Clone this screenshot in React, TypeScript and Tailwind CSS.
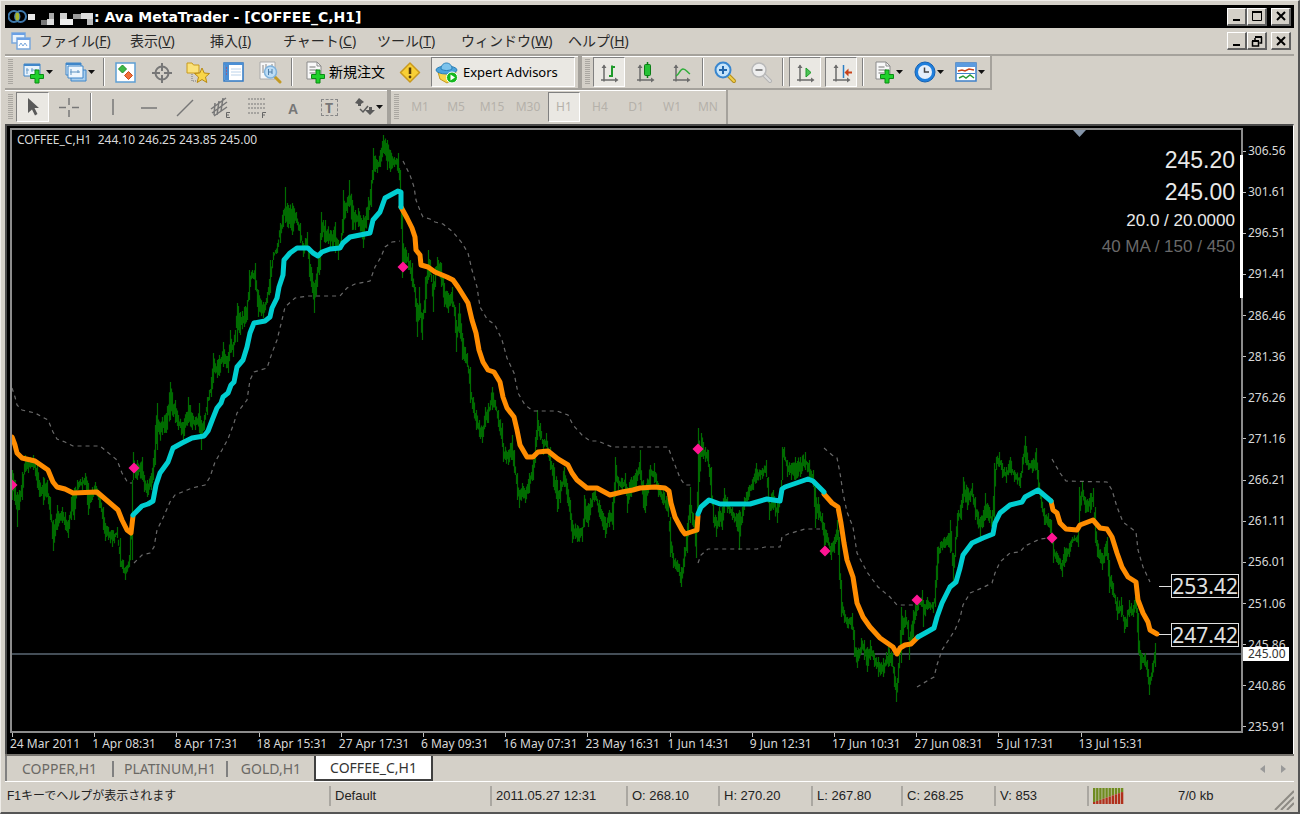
import type { ReactNode } from "react"
import clsx from "clsx"

const menus = [
  { label: "ファイル", key: "F" },
  { label: "表示", key: "V" },
  { label: "挿入", key: "I" },
  { label: "チャート", key: "C" },
  { label: "ツール", key: "T" },
  { label: "ウィンドウ", key: "W" },
  { label: "ヘルプ", key: "H" },
]

const periods = ["M1", "M5", "M15", "M30", "H1", "H4", "D1", "W1", "MN"]

const prices = [
  "306.56", "301.61", "296.51", "291.41", "286.46", "281.36", "276.26", "271.16",
  "266.21", "261.11", "256.01", "251.06", "245.86", "240.86", "235.91",
]

const dates = [
  "24 Mar 2011", "1 Apr 08:31", "8 Apr 17:31", "18 Apr 15:31", "27 Apr 17:31", "6 May 09:31", "16 May 07:31",
  "23 May 16:31", "1 Jun 14:31", "9 Jun 12:31", "17 Jun 10:31", "27 Jun 08:31", "5 Jul 17:31", "13 Jul 15:31",
]

// x, high, low
const bars = [
  [12, 470, 500], [15, 480, 505], [17, 492, 527], [19, 490, 510], [22, 472, 500], [25, 455, 470], [28, 457, 473],
  [33, 455, 470], [37, 462, 488], [39, 480, 497], [43, 477, 505], [47, 480, 497], [50, 500, 520], [53, 525, 551],
  [57, 505, 530], [62, 507, 523], [65, 512, 530], [68, 520, 538], [71, 497, 520], [74, 488, 520], [77, 480, 490],
  [82, 477, 490], [85, 473, 485], [88, 483, 515], [92, 487, 500], [95, 482, 495], [99, 495, 508], [103, 507, 530],
  [105, 523, 541], [108, 527, 540], [112, 530, 547], [117, 527, 538], [120, 555, 567], [123, 560, 573],
  [125, 567, 580], [129, 555, 567], [132, 480, 560], [133, 452, 480], [137, 460, 480], [142, 457, 480],
  [144, 475, 492], [147, 480, 497], [151, 473, 490], [153, 458, 480], [155, 425, 465], [157, 403, 450],
  [162, 417, 435], [166, 413, 433], [170, 382, 420], [175, 400, 423], [178, 415, 430], [183, 422, 440],
  [188, 397, 423], [192, 413, 430], [195, 417, 430], [199, 403, 433], [201, 420, 450], [204, 415, 430],
  [207, 397, 410], [211, 377, 397], [213, 353, 383], [217, 360, 378], [219, 355, 376], [223, 342, 367],
  [228, 352, 373], [230, 330, 353], [233, 342, 357], [237, 303, 330], [240, 312, 335], [244, 307, 327],
  [247, 300, 320], [249, 270, 293], [252, 270, 278], [255, 263, 290], [258, 293, 317], [263, 302, 318],
  [267, 292, 303], [270, 260, 293], [273, 252, 260], [277, 243, 253], [280, 223, 237], [283, 210, 227],
  [285, 187, 223], [287, 203, 227], [292, 203, 235], [296, 212, 223], [300, 223, 243], [303, 243, 257],
  [307, 232, 247], [309, 253, 277], [312, 273, 293], [314, 283, 313], [317, 267, 287], [320, 233, 270],
  [321, 212, 240], [325, 220, 243], [330, 230, 247], [335, 222, 253], [338, 240, 260], [341, 233, 250],
  [343, 190, 227], [347, 197, 213], [349, 180, 207], [352, 200, 230], [355, 210, 230], [358, 208, 227],
  [363, 215, 248], [368, 197, 220], [371, 180, 207], [373, 148, 173], [377, 160, 173], [380, 150, 167],
  [383, 135, 153], [387, 140, 170], [390, 150, 172], [394, 157, 167], [398, 153, 173], [400, 170, 203],
  [402, 213, 278], [405, 247, 263], [408, 253, 270], [412, 263, 287], [415, 287, 307], [417, 303, 337],
  [419, 287, 320], [422, 313, 340], [425, 277, 313], [428, 250, 280], [430, 260, 275], [433, 280, 312],
  [435, 267, 287], [437, 257, 273], [441, 263, 287], [444, 283, 307], [448, 293, 313], [452, 287, 307],
  [455, 307, 333], [456, 320, 352], [459, 303, 333], [462, 333, 360], [467, 353, 367], [470, 377, 403],
  [473, 397, 413], [476, 410, 430], [479, 420, 437], [482, 427, 443], [485, 407, 427], [488, 403, 423],
  [492, 387, 410], [495, 400, 410], [498, 413, 427], [502, 423, 447], [503, 443, 462], [508, 450, 465],
  [512, 435, 460], [514, 450, 473], [517, 473, 500], [519, 490, 508], [522, 483, 497], [525, 490, 503],
  [529, 473, 493], [533, 460, 480], [535, 437, 463], [537, 410, 440], [540, 423, 440], [543, 440, 455],
  [546, 433, 447], [550, 450, 470], [553, 463, 487], [557, 480, 512], [560, 480, 503], [564, 467, 487],
  [567, 483, 503], [570, 500, 520], [572, 520, 543], [577, 525, 542], [582, 527, 542], [584, 495, 523],
  [588, 503, 527], [592, 493, 507], [595, 490, 500], [599, 500, 517], [603, 513, 530], [605, 517, 538],
  [609, 510, 527], [613, 497, 530], [615, 457, 483], [618, 477, 490], [622, 478, 490], [625, 473, 493],
  [627, 487, 513], [631, 477, 497], [635, 473, 490], [640, 450, 480], [643, 482, 508], [645, 487, 513],
  [650, 465, 483], [654, 463, 483], [658, 483, 497], [663, 490, 505], [668, 500, 517], [670, 530, 557],
  [673, 553, 568], [677, 560, 572], [681, 567, 587], [684, 547, 567], [687, 523, 553], [690, 487, 523],
  [693, 513, 527], [696, 527, 558], [698, 428, 520], [701, 433, 457], [705, 447, 462], [708, 450, 467],
  [711, 470, 500], [713, 507, 523], [716, 517, 537], [719, 507, 527], [722, 507, 530], [724, 488, 513],
  [727, 497, 513], [732, 507, 520], [736, 513, 527], [739, 510, 550], [742, 507, 523], [744, 497, 510],
  [748, 487, 500], [753, 477, 490], [756, 463, 483], [760, 470, 480], [766, 460, 477], [768, 487, 503],
  [769, 497, 520], [773, 490, 510], [777, 503, 523], [781, 480, 500], [782, 447, 463], [784, 447, 460],
  [787, 460, 477], [791, 463, 480], [795, 457, 480], [800, 457, 477], [805, 452, 470], [809, 460, 477],
  [813, 470, 487], [815, 493, 528], [818, 497, 520], [822, 513, 530], [824, 523, 550], [827, 533, 543],
  [831, 543, 560], [834, 537, 553], [837, 520, 540], [839, 537, 580], [841, 597, 617], [844, 610, 623],
  [847, 617, 628], [852, 613, 630], [854, 633, 657], [857, 650, 668], [861, 638, 653], [864, 640, 660],
  [867, 647, 672], [870, 640, 660], [874, 653, 667], [878, 657, 677], [883, 658, 677], [888, 647, 667],
  [892, 653, 667], [894, 667, 687], [896, 683, 702], [898, 663, 683], [901, 607, 647], [905, 610, 627],
  [908, 620, 640], [909, 637, 660], [913, 610, 637], [915, 603, 620], [918, 597, 610], [922, 590, 607],
  [923, 600, 627], [927, 597, 610], [933, 602, 613], [935, 580, 607], [937, 547, 573], [940, 542, 553],
  [944, 537, 548], [948, 533, 547], [950, 520, 553], [953, 553, 587], [955, 537, 557], [957, 513, 527],
  [961, 500, 520], [963, 477, 503], [967, 487, 510], [972, 483, 497], [975, 503, 520], [980, 517, 537],
  [983, 510, 527], [985, 493, 520], [989, 507, 523], [992, 510, 530], [994, 463, 520], [996, 457, 470],
  [999, 452, 467], [1002, 463, 478], [1006, 467, 483], [1010, 457, 473], [1014, 470, 482], [1020, 473, 488],
  [1022, 457, 473], [1025, 436, 463], [1028, 460, 470], [1032, 460, 473], [1036, 448, 470], [1038, 473, 493],
  [1041, 493, 508], [1044, 515, 525], [1048, 513, 527], [1051, 520, 537], [1053, 543, 563], [1057, 553, 563],
  [1062, 560, 577], [1064, 547, 567], [1069, 543, 557], [1072, 537, 543], [1078, 530, 547], [1079, 487, 527],
  [1082, 482, 497], [1085, 500, 513], [1090, 493, 513], [1093, 488, 507], [1095, 520, 543], [1097, 540, 557],
  [1102, 553, 570], [1104, 547, 563], [1107, 537, 560], [1109, 563, 593], [1113, 583, 597], [1117, 603, 620],
  [1121, 597, 617], [1124, 617, 633], [1127, 610, 627], [1129, 600, 617], [1133, 605, 617], [1136, 590, 613],
  [1138, 620, 653], [1140, 650, 670], [1145, 653, 667], [1147, 660, 677], [1149, 677, 695], [1152, 663, 677],
  [1155, 643, 667],
]

const downTrends = [
  "12,437 15,445 17,453 22,458 35,461 48,470 53,482 57,487 65,489 73,493 97,492 118,510 122,520 127,530 131,533 133,516",
  "401,207 407,218 412,228 415,237 416,250 420,255 421,265 428,267 435,272 447,277 453,280 458,287 463,295 468,303 472,320 476,333 479,350 483,362 488,370 494,372 500,382 503,397 507,408 514,417 517,430 520,445 527,457 533,457 538,452 548,451 558,459 568,465 572,473 577,480 587,488 597,488 610,495 622,492 633,490 640,488 655,487 665,488 669,491 671,503 675,517 682,530 685,534 697,530 698,516",
  "824,494 832,503 838,507 841,523 844,543 847,560 853,577 857,603 863,617 870,627 880,638 893,647 897,654 900,648 905,645 911,644 918,637",
  "1051,501 1053,510 1057,513 1060,523 1066,529 1077,530 1080,525 1093,520 1100,528 1107,529 1112,537 1117,553 1122,567 1128,577 1136,582 1138,600 1143,613 1148,622 1150,630 1157,634",
]

const upTrends = [
  "133,515 142,506 148,504 153,501 156,485 160,473 168,462 173,448 182,443 192,438 204,436 208,431 213,418 217,408 221,403 223,397 228,393 231,385 234,382 237,367 243,360 247,347 250,333 254,323 265,321 270,317 272,308 277,298 279,287 283,275 284,260 290,253 297,248 308,248 313,253 318,256 322,252 330,249 340,248 343,243 350,237 370,233 373,220 380,212 385,198 398,191 401,192 401,207",
  "698,514 701,507 709,500 720,504 750,504 767,499 780,501 782,489 785,487 808,479 813,481 824,492",
  "918,637 927,632 934,628 937,617 942,603 950,587 956,582 960,568 963,555 972,543 983,538 993,534 995,523 1000,513 1010,505 1022,502 1025,497 1038,490 1051,501",
]

const bands = [
  "12,388 15,397 17,405 22,410 35,413 48,420 53,432 57,439 65,442 73,446 100,446 117,460 122,473 128,483 132,483",
  "134,563 142,555 150,553 154,547 157,530 163,518 170,502 175,495 192,488 205,485 210,477 215,462 222,450 228,439 234,423 237,413 247,400 250,380 254,372 267,368 272,353 277,340 282,320 285,307 295,298 308,296 340,296 347,288 355,284 370,281 375,267 381,257 385,247 392,242 400,241",
  "403,161 410,175 414,187 416,200 421,213 423,217 430,219 435,222 443,224 453,232 462,243 468,253 472,270 477,287 480,307 487,319 495,325 502,340 507,358 514,373 518,393 525,405 533,411 557,411 568,415 573,425 582,435 590,441 598,441 612,447 668,447 673,460 680,478 685,485 693,485",
  "698,563 701,555 708,549 757,549 765,547 780,547 782,537 788,534 805,529 820,529",
  "824,448 832,455 837,458 840,473 843,493 847,512 853,527 857,553 867,572 878,587 890,597 897,605 913,605",
  "917,687 927,681 934,677 937,665 942,650 955,630 960,618 963,605 970,593 982,588 992,583 995,573 1000,562 1010,553 1020,552 1025,546 1040,539 1050,538",
  "1052,459 1060,473 1066,481 1107,482 1112,490 1117,507 1123,522 1136,532 1138,550 1143,567 1150,582",
]

const signals = [[12, 485], [134, 468], [403, 267], [698, 449], [825, 551], [917, 600], [1052, 538]]

// fills in one bar per pixel between the known ones
function barPath() {
  let seed = 7
  const rand = () => {
    seed = (seed * 16807) % 2147483647
    return seed / 2147483647
  }
  let d = ""
  for (let i = 0; i < bars.length; i++) {
    const [x, hi, lo] = bars[i]
    d += `M${x + 0.5} ${hi}V${lo}`
    const next = bars[i + 1]
    if (!next) break
    for (let px = x + 1; px < next[0]; px++) {
      const t = (px - x) / (next[0] - x)
      const h = hi + (next[1] - hi) * t
      const l = lo + (next[2] - lo) * t
      d += `M${px + 0.5} ${(h + rand() * (l - h) * 0.4).toFixed(1)}V${(l - rand() * (l - h) * 0.4).toFixed(1)}`
    }
    // joins the two bars where the price jumps
    if (next[1] > lo || next[2] < hi) d += `M${next[0] + 0.5} ${next[1] > lo ? lo : next[2]}V${next[1] > lo ? next[1] : hi}`
  }
  return d
}

function Icon({ children }: { children: ReactNode }) {
  return (
    <svg viewBox="0 0 24 24" className="size-6 shrink-0" fill="none" aria-hidden="true">
      {children}
    </svg>
  )
}

const Plus = () => (
  <path d="M13 10h4v4.500h4.500v4H17V23h-4v-4.500H8.500v-4H13z" fill="#1fd12b" stroke="#0b8a14" />
)

const Axes = () => (
  <>
    <path d="M7 5.500v16M4 20h16" stroke="#6b6b6b" strokeWidth="1.500" />
    <path d="M4.500 8L7 4.500 9.500 8zM18 17.500l3.500 2.500-3.500 2.500z" fill="#6b6b6b" />
  </>
)

const Caret = () => (
  <svg viewBox="0 0 7 4" className="h-1 w-[7px] shrink-0" aria-hidden="true">
    <path d="M0 0h7L3.500 4z" fill="#111" />
  </svg>
)

const Page = () => (
  <>
    <path d="M4 2h10l4 4v13H4z" fill="#f8f8f8" stroke="#8b8b8b" />
    <path d="M14 2v4h4" stroke="#8b8b8b" />
    <path d="M6.500 7h6M6.500 10h8M6.500 13h6" stroke="#777" />
  </>
)

function ToolButton({
  label,
  pressed,
  className,
  children,
}: {
  label: string
  pressed?: boolean
  className?: string
  children: ReactNode
}) {
  return (
    <button
      type="button"
      aria-label={label}
      className={clsx(
        "flex h-[30px] shrink-0 items-center justify-center border",
        pressed
          ? "border-t-[#808080] border-r-white border-b-white border-l-[#808080] bg-[#eae8e3]"
          : "border-transparent",
        className ?? "w-9",
      )}
    >
      {children}
    </button>
  )
}

const Separator = () => <span className="mx-[3px] h-7 w-[2px] shrink-0 border-r border-white bg-[#808080]" />

const Grip = () => (
  <span className="mx-[3px] h-[26px] w-[5px] shrink-0 bg-[repeating-linear-gradient(#aaa7a1_0_1px,#d4d0c8_1px_2px)]" />
)

function WindowButton({ label, children }: { label: string; children: ReactNode }) {
  return (
    <button
      type="button"
      aria-label={label}
      className="flex h-[18px] w-5 items-center justify-center border-t border-r-2 border-b-2 border-l border-t-white border-r-[#606060] border-b-[#606060] border-l-white bg-[#d4d0c8]"
    >
      <svg viewBox="0 0 14 14" className="size-[14px]" fill="none" stroke="#000" strokeWidth="2" aria-hidden="true">
        {children}
      </svg>
    </button>
  )
}

function TitleBar() {
  return (
    <header className="flex h-[23px] items-center bg-black pr-[3px] pl-[3px] text-white">
      <svg viewBox="0 0 86 20" className="h-5 w-[86px]" fill="none" aria-hidden="true">
        <circle cx="6" cy="9.500" r="5.500" stroke="#3f79ad" strokeWidth="2" />
        <circle cx="12.500" cy="9.500" r="5.500" stroke="#3f79ad" strokeWidth="2" />
        <ellipse cx="9.300" cy="9.500" rx="2" ry="4" fill="#a9b62c" />
        <path d="M20 7h7v6h-7z" fill="#e8e8e8" />
        <path d="M33 13h6v5h-6z" fill="#777" />
        <path d="M39 12h7v6h-7z" fill="#ddd" />
        <path d="M41 6h5v6h-5z" fill="#aaa" />
        <path d="M52 6h7v6h-7z" fill="#d0d0d0" />
        <path d="M52 12h13v6H52z" fill="#eee" />
        <path d="M65 7h8v5h-8z" fill="#999" />
        <path d="M73 6h12v6H73z" fill="#ddd" />
        <path d="M79 12h6v6h-6z" fill="#bbb" />
      </svg>
      <h1 className="flex-1 truncate font-['DejaVu_Sans',sans-serif] text-[14px] leading-5 font-bold">
        : Ava MetaTrader - [COFFEE_C,H1]
      </h1>
      <div className="flex">
        <WindowButton label="Minimize">
          <path d="M3 11h7" />
        </WindowButton>
        <WindowButton label="Maximize">
          <path d="M2 3h10" />
          <path d="M2.500 2v9.500h9V2" strokeWidth="1" />
        </WindowButton>
        <span className="w-1" />
        <WindowButton label="Close">
          <path d="M3 3l8 8M11 3l-8 8" />
        </WindowButton>
      </div>
    </header>
  )
}

function MenuBar() {
  return (
    <nav className="flex h-7 items-center border-b-2 border-b-[#a5a29c] px-[3px]">
      <svg viewBox="0 0 20 20" className="mr-2 ml-[3px] size-5" fill="none" aria-hidden="true">
        <path d="M1 2h13v10H1z" fill="#eaf3fc" stroke="#7aa8dc" strokeWidth="1.500" />
        <path d="M1 3h13" stroke="#6ba0e4" strokeWidth="2" />
        <path d="M6 7h13v11H6z" fill="#fff" stroke="#7aa8dc" strokeWidth="1.500" />
        <path d="M6 8h13" stroke="#6ba0e4" strokeWidth="2" />
        <path d="M8 15l2-3 2 3 2-3 2 3" stroke="#7aa8dc" />
      </svg>
      <div className="grid flex-1 grid-cols-[91px_80px_73px_94px_84px_107px_auto] text-[14px] leading-5 text-[#2a2a2a]">
        {menus.map((menu) => (
          <button key={menu.key} type="button" className="text-left whitespace-nowrap">
            {menu.label}(<span className="underline">{menu.key}</span>)
          </button>
        ))}
      </div>
      <div className="flex">
        <WindowButton label="Minimize chart">
          <path d="M3 11h7" />
        </WindowButton>
        <WindowButton label="Restore chart">
          <path d="M5 3h7M2 7h7" />
          <path d="M5 4v3M11.500 3v6h-2M2.500 7v5h6V7" strokeWidth="1.500" />
        </WindowButton>
        <span className="w-1" />
        <WindowButton label="Close chart">
          <path d="M3 3l8 8M11 3l-8 8" />
        </WindowButton>
      </div>
    </nav>
  )
}

function StandardBar() {
  return (
    <div className="flex h-[34px]">
      <div className="flex items-center border-r-2 border-b-2 border-[#a5a29c] shadow-[inset_0_1px_0_#fff]">
        <Grip />
        <ToolButton label="New chart" className="w-[42px]">
          <Icon>
            <path d="M2 4h16v12H2z" fill="#e9f3fc" stroke="#3f86c9" />
            <path d="M2 5h16" stroke="#3f86c9" strokeWidth="2" />
            <path d="M5 8v6M4 10h3M10 8v4M9 10h6" stroke="#6f9fc8" />
            <Plus />
          </Icon>
          <Caret />
        </ToolButton>
        <ToolButton label="Profiles" className="w-[42px]">
          <Icon>
            <path d="M2 3h15v12H2z" fill="#dcecfa" stroke="#3f86c9" />
            <path d="M2 4h15" stroke="#3f86c9" strokeWidth="2" />
            <path d="M7 10h15v11H7z" fill="#a8cdec" stroke="#3f86c9" />
            <path d="M4 6h15v12H4z" fill="#eef6fd" stroke="#3f86c9" />
            <path d="M7 9v6M6 12h10M14 10v3" stroke="#5f93c2" />
          </Icon>
          <Caret />
        </ToolButton>
        <Separator />
        <ToolButton label="Market Watch">
          <Icon>
            <path d="M2 3h19v19H2z" fill="#fff" stroke="#5d9fd4" strokeWidth="1.500" />
            <path d="M8.500 5L12.500 9l-4 4-4-4z" fill="#3dbb45" stroke="#1f8a2a" />
            <path d="M14.500 11.500l4 4-4 4-4-4z" fill="#f0703a" stroke="#c94c1a" />
          </Icon>
        </ToolButton>
        <ToolButton label="Data Window">
          <Icon>
            <circle cx="12" cy="13" r="6.500" stroke="#777" strokeWidth="2" />
            <path d="M12 3v8M12 15v8M2 13h8M14 13h8" stroke="#777" strokeWidth="2" />
          </Icon>
        </ToolButton>
        <ToolButton label="Navigator">
          <Icon>
            <path d="M1 3h5l1.500 2H13v8H1z" fill="#fbe27a" stroke="#c99a1c" />
            <path d="M6 14v7h6" stroke="#777" strokeDasharray="1 1" />
            <path d="M16 8l2.200 5 5.300.5-4 3.500 1.300 5.500L16 19.500l-4.800 3 1.300-5.500-4-3.500 5.300-.5z" fill="#f9d648" stroke="#b98a13" />
          </Icon>
        </ToolButton>
        <ToolButton label="Terminal">
          <Icon>
            <path d="M2 3h19v18H2z" fill="#fff" stroke="#2f78c4" strokeWidth="1.500" />
            <path d="M2 3h19v2H2zM3 5h4v15H3z" fill="#4a8fd6" />
            <path d="M9 9h10M9 12h10M9 15h10" stroke="#bcd3ea" />
            <path d="M4 8h1M4 11h1M4 14h1" stroke="#d33" />
          </Icon>
        </ToolButton>
        <ToolButton label="Strategy Tester">
          <Icon>
            <path d="M2 2h15v17H2z" fill="#f7f7f7" stroke="#aaa" />
            <path d="M5 5v8M8 4v6M14 4v5" stroke="#888" />
            <path d="M17 17l5 5" stroke="#c39a23" strokeWidth="3" strokeLinecap="round" />
            <circle cx="12.500" cy="12" r="6" fill="#bcdcf5" stroke="#7fb2dc" strokeWidth="1.500" />
            <path d="M10.500 9v6M14 9v5M10.500 12H14" stroke="#4f7ea8" />
          </Icon>
        </ToolButton>
        <Separator />
        <ToolButton label="New order" className="w-[96px] gap-[2px]">
          <Icon>
            <Page />
            <Plus />
          </Icon>
          <span className="text-[14px] leading-5 text-black">新規注文</span>
        </ToolButton>
        <ToolButton label="Alerts">
          <Icon>
            <path d="M12 3l9.500 9.500L12 22l-9.500-9.500z" fill="#f8cf35" stroke="#c9991f" strokeWidth="1.500" strokeLinejoin="round" />
            <path d="M12 7.500v6.500" stroke="#5a3d08" strokeWidth="2.500" />
            <circle cx="12" cy="17" r="1.400" fill="#5a3d08" />
          </Icon>
        </ToolButton>
        <ToolButton label="Expert Advisors" pressed className="mx-[3px] w-[144px] justify-start gap-1 pl-[3px]">
          <Icon>
            <path d="M3 12h18l-3 7-6 4-7-4z" fill="#f8d548" stroke="#c79a1b" />
            <ellipse cx="11.500" cy="10" rx="10.500" ry="4" fill="#4aa3dc" stroke="#2b7fb6" />
            <path d="M6 9c0-8 11-8 11 0-3 2-8 2-11 0z" fill="#7cc3ec" stroke="#2b7fb6" />
            <circle cx="17" cy="17.500" r="5.500" fill="#14b81e" stroke="#fff" />
            <path d="M15.500 14.500l4.500 3-4.500 3z" fill="#fff" />
          </Icon>
          <span className="text-[13px] leading-5 text-black">Expert Advisors</span>
        </ToolButton>
      </div>
      <div className="flex items-center border-r-2 border-b-2 border-l-2 border-[#a5a29c] shadow-[inset_0_1px_0_#fff]">
        <Grip />
        <ToolButton label="Bar chart" pressed className="mr-[2px] w-8">
          <Icon>
            <Axes />
            <path d="M15 5.500V17M15 7h3M12 16h3" stroke="#1f9a2b" strokeWidth="2" />
          </Icon>
        </ToolButton>
        <ToolButton label="Candlesticks">
          <Icon>
            <Axes />
            <path d="M14.500 2v16" stroke="#0c7d17" strokeWidth="1.500" />
            <rect x="11.500" y="4.500" width="6" height="11" rx="1" fill="#27c235" stroke="#0c7d17" />
          </Icon>
        </ToolButton>
        <ToolButton label="Line chart">
          <Icon>
            <Axes />
            <path d="M7 16c3-1 4-7 7-7s4 3 7 5" stroke="#2fae3a" strokeWidth="1.500" />
          </Icon>
        </ToolButton>
        <Separator />
        <ToolButton label="Zoom in">
          <Icon>
            <path d="M15 15l6 6" stroke="#b48d1c" strokeWidth="4" strokeLinecap="round" />
            <path d="M15 15l6 6" stroke="#f1cf4a" strokeWidth="2" strokeLinecap="round" />
            <circle cx="10" cy="10" r="7.500" fill="#c6e4fa" stroke="#3886cf" strokeWidth="2" />
            <path d="M10 6v8M6 10h8" stroke="#2166ab" strokeWidth="2" />
          </Icon>
        </ToolButton>
        <ToolButton label="Zoom out">
          <Icon>
            <path d="M15 15l6 6" stroke="#b4b4b4" strokeWidth="4" strokeLinecap="round" />
            <path d="M15 15l6 6" stroke="#ddd" strokeWidth="2" strokeLinecap="round" />
            <circle cx="10" cy="10" r="7" fill="#eee" stroke="#b8b8b8" strokeWidth="1.500" />
            <path d="M6.500 10h7" stroke="#888" strokeWidth="2" />
          </Icon>
        </ToolButton>
        <Separator />
        <ToolButton label="Auto scroll" pressed className="mx-[2px] w-8">
          <Icon>
            <Axes />
            <path d="M13 8l5 4.500-5 4.500z" fill="#4cc456" stroke="#1f9a2b" />
          </Icon>
        </ToolButton>
        <ToolButton label="Chart shift" pressed className="mx-[2px] w-8">
          <Icon>
            <Axes />
            <path d="M14.500 5v13" stroke="#2b7fc4" strokeWidth="1.500" />
            <path d="M18 12.500h5" stroke="#c8421a" strokeWidth="2" />
            <path d="M19.500 8.500v8l-4-4z" fill="#c8421a" />
          </Icon>
        </ToolButton>
        <Separator />
        <ToolButton label="Indicators" className="w-[41px]">
          <Icon>
            <Page />
            <Plus />
          </Icon>
          <Caret />
        </ToolButton>
        <ToolButton label="Periods" className="w-[41px]">
          <Icon>
            <circle cx="12" cy="12" r="10" fill="#1f7fdd" stroke="#1561b3" />
            <circle cx="12" cy="12" r="7" fill="#e6effa" />
            <path d="M11.500 7.500V12H16" stroke="#444" strokeWidth="1.500" />
          </Icon>
          <Caret />
        </ToolButton>
        <ToolButton label="Templates" className="w-[41px]">
          <Icon>
            <path d="M2 3h20v18H2z" fill="#fff" stroke="#3f80c8" strokeWidth="1.500" />
            <path d="M2 3h20v4H2z" fill="#5b9be0" />
            <path d="M4 11l4-1 3 1 4-2 5 1" stroke="#c8421a" strokeWidth="1.500" />
            <path d="M3 13.500h18" stroke="#3f80c8" />
            <path d="M5 18l4-2 3 2 4-3 4 3" stroke="#2a9a35" strokeWidth="1.500" />
          </Icon>
          <Caret />
        </ToolButton>
      </div>
    </div>
  )
}

function DrawingBar() {
  return (
    <div className="flex h-[34px]">
      <div className="flex items-center border-r-2 border-[#a5a29c] shadow-[inset_0_1px_0_#fff]">
        <Grip />
        <ToolButton label="Cursor" pressed className="w-[33px]">
          <Icon>
            <path d="M7 3v15l4-3.500 3 6 2.500-1.500-3-6H18z" fill="#5a5a5a" />
          </Icon>
        </ToolButton>
        <ToolButton label="Crosshair" className="ml-[2px] w-9">
          <Icon>
            <path d="M12 3v7M12 15v7M2 12.500h7M15 12.500h7" stroke="#777" strokeWidth="1.500" />
          </Icon>
        </ToolButton>
        <Separator />
        <ToolButton label="Vertical line">
          <Icon>
            <path d="M12 4v16" stroke="#777" strokeWidth="1.500" />
          </Icon>
        </ToolButton>
        <ToolButton label="Horizontal line">
          <Icon>
            <path d="M4 13h16" stroke="#777" strokeWidth="1.500" />
          </Icon>
        </ToolButton>
        <ToolButton label="Trendline">
          <Icon>
            <path d="M4 21L20 5" stroke="#777" strokeWidth="1.500" />
          </Icon>
        </ToolButton>
        <ToolButton label="Equidistant channel">
          <Icon>
            <path d="M2 14L17 3M3 18L18 7M5 21L18 12M6 8l-1 12M10 6L8 20M14 3l-2 13" stroke="#777" strokeWidth="1.500" />
            <path d="M21 17.500h-3.500v5H21M17.500 20H20" stroke="#666" />
          </Icon>
        </ToolButton>
        <ToolButton label="Fibonacci retracement">
          <Icon>
            <path d="M3 4h18M3 9h18M3 13h18M3 18h11" stroke="#777" strokeDasharray="2 1" />
            <path d="M17.500 23v-5.500H21M17.500 20H20" stroke="#666" />
          </Icon>
        </ToolButton>
        <ToolButton label="Text">
          <span className="pt-1 font-['Liberation_Sans',sans-serif] text-[14px] leading-5 font-bold text-[#777]">A</span>
        </ToolButton>
        <ToolButton label="Text label">
          <span className="flex size-[17px] items-center justify-center border border-dashed border-[#888] text-[14px] font-bold text-[#777]">
            T
          </span>
        </ToolButton>
        <ToolButton label="Arrows" className="w-10">
          <Icon>
            <path d="M7 3l5 4-3 2v2H6V9L3 8z" fill="#5a5a5a" />
            <path d="M8 14l3 3 5-6" stroke="#5a5a5a" strokeWidth="1.500" />
            <path d="M17 12h3v3h3l-5 5-5-5h4z" fill="#5a5a5a" />
          </Icon>
          <Caret />
        </ToolButton>
      </div>
      <div className="flex items-center border-r-2 border-l-2 border-[#a5a29c] shadow-[inset_0_1px_0_#fff]">
        <Grip />
        {periods.map((period) => (
          <ToolButton
            key={period}
            label={period}
            pressed={period === "H1"}
            className={period === "H1" ? "mx-[2px] w-8" : undefined}
          >
            <span className="text-[12px] text-[#b5b1aa]">{period}</span>
          </ToolButton>
        ))}
      </div>
    </div>
  )
}

function PriceTag({ price, className }: { price: string; className: string }) {
  return (
    <div className={clsx("absolute right-[2px] flex -translate-y-1/2 items-center text-[#e0e0e0]", className)}>
      <span className="h-px w-3 bg-[#e0e0e0]" />
      <span className="border border-[#e0e0e0] bg-black text-[21px] leading-[22px]">{price}</span>
    </div>
  )
}

function Chart() {
  return (
    <main className="grid min-h-0 flex-1 grid-cols-[1fr_50px] grid-rows-[1fr_21px] border-t-2 border-r border-l-2 border-t-[#4a4a4a] border-r-white border-l-[#4a4a4a] bg-black pt-[2px] pl-[3px] text-[12px] text-[#d8d8d8]">
      <section className="relative min-h-0 border-2 border-[#8c8c8c]">
        <svg
          viewBox="12 130 1229 601"
          preserveAspectRatio="none"
          className="absolute inset-0 size-full"
          fill="none"
          role="img"
          aria-label="COFFEE_C,H1"
        >
          <path d="M12 654H1241" stroke="#5b6975" strokeWidth="1.500" />
          <path d={barPath()} stroke="#006c00" strokeWidth="1.200" />
          {bands.map((points) => (
            <polyline key={points} points={points} stroke="#6a6a6a" strokeWidth="1.200" strokeDasharray="4 4" />
          ))}
          {downTrends.map((points) => (
            <polyline key={points} points={points} stroke="#ff8c00" strokeWidth="5" strokeLinejoin="round" strokeLinecap="round" />
          ))}
          {upTrends.map((points) => (
            <polyline key={points} points={points} stroke="#00ced1" strokeWidth="5" strokeLinejoin="round" strokeLinecap="round" />
          ))}
          {signals.map(([x, y]) => (
            <path key={x} d={`M${x} ${y - 5.5}l5.500 5.500-5.500 5.500-5.500-5.500z`} fill="#ff1493" />
          ))}
          <path d="M1073 130h13l-6.500 7z" fill="#8494a8" />
        </svg>
        <span className="absolute top-[4.200%] -right-[2px] h-[23.800%] w-[3px] bg-white" />
        <p className="absolute top-[2px] left-[5px] leading-4 whitespace-pre">
          COFFEE_C,H1{"  "}244.10 246.25 243.85 245.00
        </p>
        <div className="absolute top-[14px] right-[6px] text-right font-['Liberation_Sans',sans-serif] text-[17px] leading-[26px] text-[#e8e8e8]">
          <p className="text-[23px] leading-8">245.20</p>
          <p className="text-[23px] leading-8">245.00</p>
          <p>20.0 / 20.0000</p>
          <p className="text-[#696969]">40 MA / 150 / 450</p>
        </div>
        <PriceTag price="253.42" className="top-[75.900%]" />
        <PriceTag price="247.42" className="top-[84%]" />
      </section>
      <div className="relative flex flex-col justify-between pt-[17px]">
        {prices.map((price) => (
          <div key={price} className="flex items-center gap-[2px] leading-3">
            <span className="h-px w-[3px] bg-[#c0c0c0]" />
            {price}
          </div>
        ))}
        <span className="absolute top-[86.900%] right-1 left-0 -translate-y-1/2 bg-white pl-[5px] leading-[14px] text-[#333]">
          245.00
        </span>
      </div>
      <div className="grid grid-cols-15">
        {dates.map((date) => (
          <div key={date} className="leading-[14px] whitespace-nowrap">
            <span className="ml-[2px] block h-1 w-px bg-[#c0c0c0]" />
            {date}
          </div>
        ))}
      </div>
    </main>
  )
}

function Tabs() {
  return (
    <div className="flex h-7 items-start justify-between border-t-2 border-b border-t-[#77746f] border-b-white text-[14px] text-[#6b6965]">
      <div className="flex h-[25px] items-center border-l-2 border-[#808080]">
        <button type="button" className="w-[107px] border-r-2 border-[#808080] leading-4">COPPER,H1</button>
        <button type="button" className="w-[114px] border-r-2 border-[#808080] leading-4">PLATINUM,H1</button>
        <button type="button" className="w-[86px] leading-4">GOLD,H1</button>
        <button type="button" className="h-[25px] w-[119px] border-r-2 border-b-2 border-l-2 border-[#404040] bg-white text-[#333]">
          COFFEE_C,H1
        </button>
      </div>
      <div className="flex h-[25px] items-center gap-4 pr-2">
        <button type="button" aria-label="Scroll left">
          <svg viewBox="0 0 5 8" className="h-2 w-[5px]"><path d="M5 0v8L0 4z" fill="#999" /></svg>
        </button>
        <button type="button" aria-label="Scroll right">
          <svg viewBox="0 0 5 8" className="h-2 w-[5px]"><path d="M0 0v8l5-4z" fill="#999" /></svg>
        </button>
      </div>
    </div>
  )
}

function StatusBar() {
  const cell = "flex h-5 shrink-0 items-center border-l-2 border-[#aaa7a1] pl-1"
  return (
    <footer className="flex h-7 items-center font-['Liberation_Sans','Noto_Sans_CJK_JP',sans-serif] text-[13px] text-[#222]">
      <span className="flex-1 truncate pl-[2px] text-[12px] leading-4">F1キーでヘルプが表示されます</span>
      <span className={clsx(cell, "w-[161px]")}>Default</span>
      <span className={clsx(cell, "w-[136px]")}>2011.05.27 12:31</span>
      <span className={clsx(cell, "w-[92px]")}>O: 268.10</span>
      <span className={clsx(cell, "w-[93px]")}>H: 270.20</span>
      <span className={clsx(cell, "w-[90px]")}>L: 267.80</span>
      <span className={clsx(cell, "w-[93px]")}>C: 268.25</span>
      <span className={clsx(cell, "w-[93px]")}>V: 853</span>
      <span className={clsx(cell, "w-[187px]")}>
        <svg viewBox="0 0 32 16" className="h-4 w-8" aria-hidden="true">
          {[0, 1, 2, 3, 4, 5, 6, 7, 8, 9].map((i) => (
            <g key={i}>
              <path d={`M${i * 3.1} 0h2.400v${14 - i * 1.1}h-2.400z`} fill="#6f8c1f" />
              <path d={`M${i * 3.1} ${14 - i * 1.1}h2.400V16h-2.400z`} fill="#b0301c" />
            </g>
          ))}
        </svg>
        <span className="ml-[53px]">7/0 kb</span>
      </span>
      <svg viewBox="0 0 20 20" className="size-5 self-end" aria-hidden="true">
        <path d="M1 20L20 1M7 20L20 7M13 20l7-7" stroke="#8d8a84" strokeWidth="2" />
      </svg>
    </footer>
  )
}

export default function App() {
  return (
    <div className="flex h-screen min-h-[480px] flex-col overflow-hidden border-t border-r-2 border-b-2 border-l border-t-[#eeece8] border-r-[#555] border-b-[#555] border-l-[#eeece8] bg-[#d4d0c8] px-1 pt-1 pb-[2px] font-['Noto_Sans','Noto_Sans_CJK_JP',sans-serif]">
      <TitleBar />
      <MenuBar />
      <StandardBar />
      <DrawingBar />
      <Chart />
      <Tabs />
      <StatusBar />
    </div>
  )
}
